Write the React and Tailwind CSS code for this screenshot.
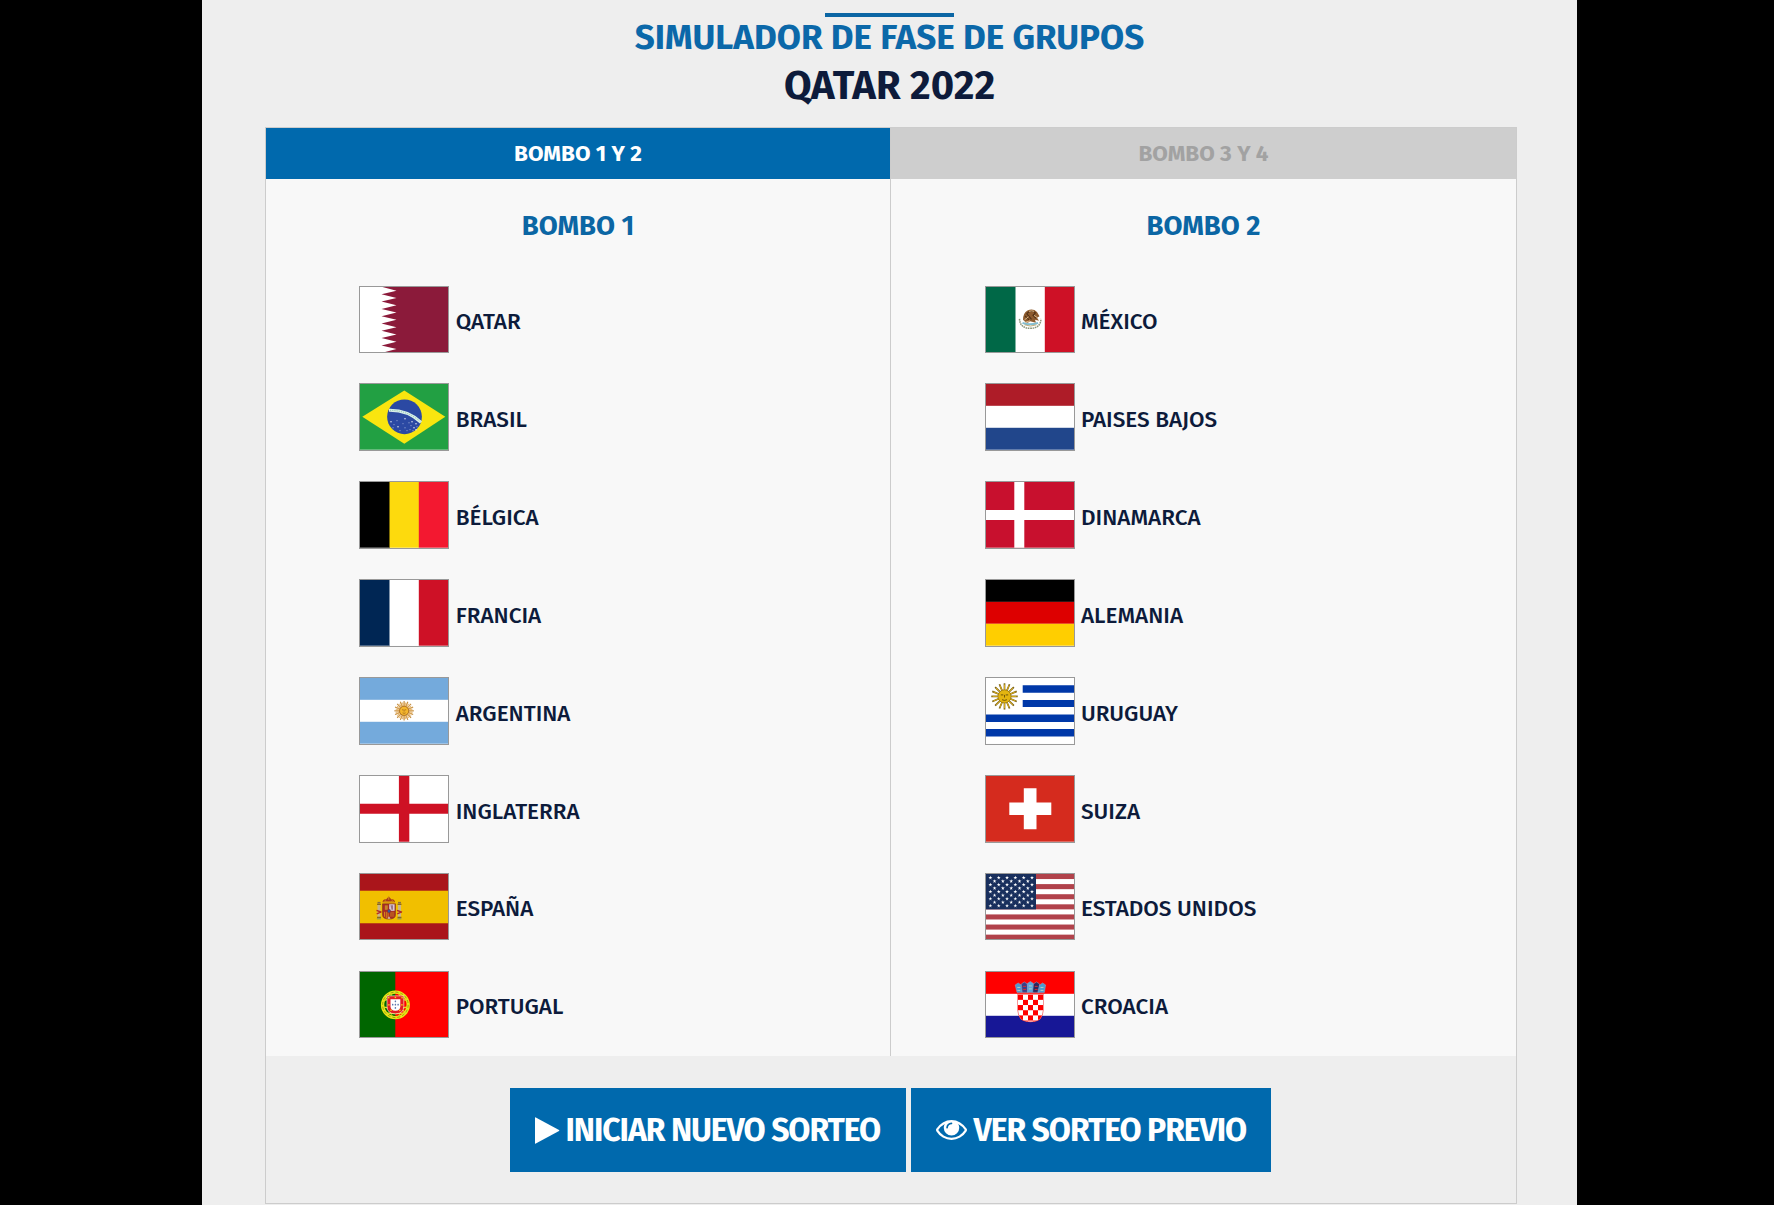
const range = (n) => Array.from({ length: n }, (_, i) => i);

const Vertical = ({ colors }) => (
  <>
    <rect width="30" height="66" fill={colors[0]} />
    <rect x="29.5" width="29.5" height="66" fill={colors[1]} />
    <rect x="58.8" width="29.2" height="66" fill={colors[2]} />
  </>
);

const Horizontal = ({ colors }) => (
  <>
    <rect width="88" height="22" fill={colors[0]} />
    <rect y="22" width="88" height="22" fill={colors[1]} />
    <rect y="44" width="88" height="22" fill={colors[2]} />
  </>
);

function Rays({ cx, cy, inner, outer, count, color, width }) {
  return range(count).map((i) => {
    const a = (i * 2 * Math.PI) / count;
    return (
      <line
        key={i}
        x1={cx + inner * Math.sin(a)}
        y1={cy - inner * Math.cos(a)}
        x2={cx + outer * Math.sin(a)}
        y2={cy - outer * Math.cos(a)}
        stroke={color}
        strokeWidth={width}
      />
    );
  });
}

function Qatar() {
  let d = "M88 0H22.5";
  range(9).forEach((i) => {
    d += `L36.5 ${(i + 0.5) * 7.333}L${i === 8 ? 22.5 : 21.5} ${(i + 1) * 7.333}`;
  });
  return (
    <>
      <rect width="88" height="66" fill="#fff" />
      <path d={d + "H88Z"} fill="#8b1a3a" />
    </>
  );
}

function Brasil() {
  const stars = [[31, 38], [34, 41], [37, 37], [38, 43], [33, 44], [43, 40], [45, 35], [49, 39], [51, 42], [54, 44], [50, 46], [53, 47], [56, 40], [57, 43], [47, 47], [52, 38], [40, 47], [45, 44], [56, 46]];
  return (
    <>
      <rect width="88" height="66" fill="#22a043" />
      <path d="M44.3 6.5 85.3 33 44.3 60 2.3 33Z" fill="#f9e50f" />
      <circle cx="44.5" cy="33" r="17.4" fill="#2b49a3" />
      <path d="M29 26.3Q48 26 61 38.5" fill="none" stroke="#d8eee8" strokeWidth="3" />
      <path d="M30 26.5Q48 26.5 60.5 38" fill="none" stroke="#58a88b" strokeWidth=".6" strokeDasharray="1 1.2" />
      {stars.map(([x, y], i) => (
        <circle key={i} cx={x} cy={y} r={i % 3 ? 0.5 : 0.75} fill="#dfe6f5" />
      ))}
    </>
  );
}

function Argentina() {
  return (
    <>
      <Horizontal colors={["#74aadc", "#fff", "#74aadc"]} />
      <Rays cx={44.1} cy={33} inner={4} outer={9.8} count={16} color="#c08a3c" width={1.1} />
      <Rays cx={44.1} cy={33} inner={4} outer={8.6} count={32} color="#dfa650" width={0.8} />
      <circle cx="44.1" cy="33" r="4.6" fill="#f4b62c" stroke="#a5671d" strokeWidth=".8" />
      <path d="M42 32h1.5m1.2 0h1.5M42.600 35q1.500 1 3 0M44.100 32v1.800" stroke="#8a5015" strokeWidth=".6" fill="none" />
    </>
  );
}

function Espana() {
  return (
    <>
      <rect width="88" height="66" fill="#aa151b" />
      <rect y="16.8" width="88" height="32.7" fill="#f1bf00" />
      <path d="M22.5 28.5Q23 25 26 25.5L28.7 22.5 31.5 25.5Q34.5 25 35 28.5Z" fill="#a93a1d" />
      <path d="M28.7 22v4M23.5 27.8H34M25 26.3l1 1.5m6.5-1.5-1 1.5" stroke="#d99b13" strokeWidth=".8" />
      <path d="M22.500 30H35.500V41Q35.500 45.300 29 45.300T22.500 41Z" fill="#a92b24" stroke="#7d3b1d" strokeWidth=".6" />
      <rect x="29.2" y="30.4" width="5.4" height="6.6" fill="#d5cbd3" />
      <path d="M30.5 31.5h2.5v4.5h-1.5z" fill="#9c7488" />
      <path d="M24.8 31.5h3v4.5h-3z" fill="#c7842a" />
      <path d="M24.5 38v5m1.8-5v6.5m1.8-6.5v6.5" stroke="#e6af18" strokeWidth=".7" />
      <path d="M30 38h4.2v5H30z" fill="#b85620" />
      <ellipse cx="29" cy="37.3" rx="1.6" ry="1.9" fill="#315b9c" stroke="#a5201c" strokeWidth=".5" />
      <path d="M29 42.5 27.5 45h3z" fill="#d9c4b1" />
      {[17.5, 38].map((x) => (
        <g key={x}>
          <path d={`M${x} 31h3v12h-3z`} fill="#c9b58a" />
          <path d={`M${x - 0.5} 30.5h4M${x - 0.5} 43.5h4`} stroke="#8e6a1c" strokeWidth="1.3" />
          <path d={`M${x} 28h3v1.7h-3z`} fill="#8b6e40" />
          <path d={`M${x - 1} 36.5l5 2M${x - 0.8} 40l4.5-2`} stroke="#b33024" strokeWidth="1.5" />
          <path d={`M${x - 0.6} 45h4`} stroke="#61827d" strokeWidth=".8" />
        </g>
      ))}
    </>
  );
}

function Portugal() {
  return (
    <>
      <rect width="88" height="66" fill="#060" />
      <rect x="35.3" width="52.7" height="66" fill="#f00" />
      <circle cx="35.4" cy="33" r="12.8" fill="none" stroke="#e9e514" strokeWidth="3.4" />
      <ellipse cx="35.4" cy="33" rx="6" ry="13.5" fill="none" stroke="#dedb1b" strokeWidth="1" />
      <path d="M23 29Q35 24 48 29M22.5 35Q35 38 48.5 35M24 40.5Q35 43 47 40.5M25 23.5 47 42" fill="none" stroke="#e5df1b" strokeWidth="1.2" />
      <circle cx="35.4" cy="33" r="12.8" fill="none" stroke="#54660c" strokeWidth=".5" strokeDasharray="3 2" />
      <path d="M27 24H43.8V34.5Q43.8 42 35.4 42T27 34.5Z" fill="#e31c22" stroke="#f3e7c2" strokeWidth=".7" />
      <path d="M30.5 27.5H40.3V34.5Q40.3 39 35.4 39T30.5 34.5Z" fill="#fff" />
      {[[35.4, 29.5], [32.7, 32.8], [35.4, 32.8], [38.1, 32.8], [35.4, 36.1]].map(([x, y]) => (
        <rect key={`${x}-${y}`} x={x - 0.7} y={y - 0.9} width="1.4" height="1.8" rx=".5" fill="#5b76ad" />
      ))}
      {[[28.7, 25.8], [35.4, 25.5], [42.1, 25.8], [28.9, 33], [41.9, 33], [31, 38.5], [39.8, 38.5]].map(([x, y]) => (
        <rect key={`${x}-${y}`} x={x - 0.7} y={y - 0.7} width="1.4" height="1.4" fill="#f2dc18" />
      ))}
    </>
  );
}

function Mexico() {
  return (
    <>
      <Vertical colors={["#006847", "#fff", "#ce1126"]} />
      <path d="M33.500 32Q34 41.500 44.300 41.500T55 32" fill="none" stroke="#8a9478" strokeWidth="1.5" strokeDasharray="1.6 .7" />
      <path d="M37 33Q37 26 41.500 23.500Q47 21 51 25L53.500 29.500 51 31 53 34 49 33 50 36 44 34.500Q41 38 37 33Z" fill="#8d5b2e" />
      <path d="M41 26.5Q45 22.5 49.5 26L47 28.5 50 31.5M39 29l4 4M40.5 26.500l5 6" fill="none" stroke="#503015" strokeWidth="1.1" />
      <path d="M43 24.5q3-1 5 0M48 28.5l3 2M38.5 33l4-3M39 35.500l5-1.500" stroke="#dcb98a" strokeWidth="1" fill="none" />
      <path d="M36.500 36Q44 39 52 36" fill="none" stroke="#83bed1" strokeWidth="2" />
      <path d="M38.5 38Q44.5 40.500 50.5 38" fill="none" stroke="#b29a5a" strokeWidth=".8" />
    </>
  );
}

function Uruguay() {
  return (
    <>
      <rect width="88" height="66" fill="#fff" />
      <path d="M36.7 7.3H88v7.5H36.7zM36.7 22H88v7.2H36.7zM0 36.7H88v7.5H0zM0 51.3H88v7.5H0z" fill="#0038a8" />
      <Rays cx={18.5} cy={18.5} inner={5} outer={13.2} count={16} color="#7a6012" width={1.7} />
      <Rays cx={18.5} cy={18.5} inner={5} outer={12} count={16} color="#d9ad1c" width={1} />
      <circle cx="18.5" cy="18.5" r="6.6" fill="#e3b510" stroke="#8b6d14" strokeWidth=".7" />
      <path d="M14.8 17h2.5m2.4 0h2.5M18.5 17v2.6M16 21.8q2.5 1.4 5 0" stroke="#654b08" strokeWidth=".9" fill="none" />
    </>
  );
}

function EstadosUnidos() {
  return (
    <>
      <rect width="88" height="66" fill="#fff" />
      {range(7).map((i) => (
        <rect key={i} y={i * 10.154} width="88" height="5.077" fill="#b1424b" />
      ))}
      <rect width="50" height="35.54" fill="#192f5d" />
      {range(9).flatMap((r) =>
        range(r % 2 ? 5 : 6).map((c) => {
          const x = 4.4 + c * 8.32 + (r % 2 ? 4.16 : 0);
          const y = 3.7 + r * 3.52;
          return (
            <path
              key={`${r}-${c}`}
              transform={`translate(${x} ${y}) scale(1.15)`}
              d="M0-1.7.4-.5 1.7-.5.6.2 1 1.5 0 .7-1 1.5-.6.2-1.7-.5-.4-.5Z"
              fill="#fff"
            />
          );
        })
      )}
    </>
  );
}

function Croacia() {
  const crown = ["#4c9bd0", "#3a3f86", "#5aa7dc", "#27275f", "#4c9bd0"];
  return (
    <>
      <Horizontal colors={["#f00", "#fff", "#171796"]} />
      <clipPath id="shield">
        <path d="M32 22.5H57V38Q57 50 44.5 50T32 38Z" />
      </clipPath>
      <path d="M31.5 22H57.5V38Q57.5 50.5 44.5 50.5T31.5 38Z" fill="#e33" />
      <g clipPath="url(#shield)">
        <rect x="32" y="22" width="25" height="29" fill="#fff" />
        {range(6).flatMap((r) =>
          range(5).map((c) =>
            (r + c) % 2 ? null : (
              <rect key={`${r}-${c}`} x={32 + c * 5} y={22.8 + r * 5.2} width="5" height="5.2" fill="#f00" />
            )
          )
        )}
      </g>
      {crown.map((fill, i) => {
        const x = 29.2 + i * 6.1;
        const y = [13, 12, 11.5, 12, 13][i];
        const lean = [2, 1, 0, -1, -2][i];
        return (
          <g key={i}>
            <path
              d={`M${x} ${y}l3-2 3 2L${x + 6 + lean * 0.6} 20.5H${x + lean * 0.9}Z`}
              fill={fill}
              stroke="#8cabd0"
              strokeWidth=".5"
            />
            <path
              d={`M${x + 1.5 + lean * 0.3} ${y + 2.5}h3m-3 3h3`}
              stroke={i % 2 ? "#d52b35" : "#b9cfc0"}
              strokeWidth="1"
            />
          </g>
        );
      })}
    </>
  );
}

const Inglaterra = () => (
  <>
    <rect width="88" height="66" fill="#fff" />
    <path d="M38.900 0h10.400v66H38.900zM0 28h88v10H0z" fill="#ce1124" />
  </>
);

const Dinamarca = () => (
  <>
    <rect width="88" height="66" fill="#c8102e" />
    <path d="M28.3 0h10v66h-10zM0 28.2h88v10H0z" fill="#fff" />
  </>
);

const Suiza = () => (
  <>
    <rect width="88" height="66" fill="#d52b1e" />
    <path d="M37.800 12.3h12.7v41.2H37.800zM23.3 26.6h42v12.6h-42z" fill="#fff" />
  </>
);

const pots = [
  {
    title: "BOMBO 1",
    spacing: "ml-[93px] [&>li]:gap-[6.7px]",
    teams: [
      ["QATAR", <Qatar />],
      ["BRASIL", <Brasil />],
      ["BÉLGICA", <Vertical colors={["#000", "#fdda0d", "#f31830"]} />],
      ["FRANCIA", <Vertical colors={["#002654", "#fff", "#ce1126"]} />],
      ["ARGENTINA", <Argentina />],
      ["INGLATERRA", <Inglaterra />],
      ["ESPAÑA", <Espana />],
      ["PORTUGAL", <Portugal />],
    ],
  },
  {
    title: "BOMBO 2",
    spacing: "ml-[94px] [&>li]:gap-[6px]",
    teams: [
      ["MÉXICO", <Mexico />],
      ["PAISES BAJOS", <Horizontal colors={["#ae1c28", "#fff", "#21468b"]} />],
      ["DINAMARCA", <Dinamarca />],
      ["ALEMANIA", <Horizontal colors={["#000", "#d00", "#ffce00"]} />],
      ["URUGUAY", <Uruguay />],
      ["SUIZA", <Suiza />],
      ["ESTADOS UNIDOS", <EstadosUnidos />],
      ["CROACIA", <Croacia />],
    ],
  },
];

function Pot({ title, spacing, teams }) {
  return (
    <section className="bg-[#f8f8f8]">
      <h3 className="pt-[27px] text-center text-[27.5px] leading-[40px] font-bold text-[#0b66a4]">{title}</h3>
      <ul className={`mt-[39.5px] flex flex-col gap-[30.2px] ${spacing}`}>
        {teams.map(([name, flag]) => (
          <li key={name} className="flex h-[67.7px] items-center">
            <svg
              viewBox="0 0 88 66"
              preserveAspectRatio="none"
              className="h-full w-[90px] shrink-0 border border-[#999999]"
            >
              {flag}
            </svg>
            <span className="pt-[5.8px] text-[22.5px] leading-[30px] font-medium whitespace-nowrap text-[#0d1b3b]">
              {name}
            </span>
          </li>
        ))}
      </ul>
    </section>
  );
}

export default function App() {
  return (
    <div className="h-[1205px] w-[1774px] overflow-hidden bg-black font-['Fira_Sans','Noto_Sans',sans-serif]">
      <main className="ml-[202px] h-full w-[1375px] bg-[#eeeeee] pt-[13px] pl-[63px]">
        <header className="flex w-[1252px] flex-col items-center pr-[3px]">
          <div className="h-1 w-[129px] bg-[#0b66a4]" />
          <h1 className="mt-[-3px] text-[35px] leading-[46px] font-bold text-[#0b68a9]">
            SIMULADOR DE FASE DE GRUPOS
          </h1>
          <h2 className="text-[40px] leading-[53px] font-bold text-[#0d1b3b]">QATAR 2022</h2>
        </header>
        <div className="mt-[14px] h-[1077px] w-[1252px] border border-[#cccccc]">
          <div className="grid h-[51px] grid-cols-[624px_1fr] text-center text-[22.5px] leading-[52px] font-bold">
            <div className="h-[51px] bg-[#0069ad] text-white">BOMBO 1 Y 2</div>
            <div className="h-[51px] border-l border-[#cccccc] bg-[#cecece] text-[#a2a2a2]">BOMBO 3 Y 4</div>
          </div>
          <div className="grid h-[877px] grid-cols-[624px_1px_1fr]">
            <Pot {...pots[0]} />
            <div className="bg-[#cccccc]" />
            <Pot {...pots[1]} />
          </div>
          <div className="flex gap-[5px] pt-8 pl-[244px] text-[32px] leading-[84px] font-bold tracking-[-1.07px] whitespace-nowrap text-white">
            <button className="flex h-[84px] w-[396px] items-center bg-[#0069ad] pl-[25px]">
              <svg viewBox="0 0 25 27" className="mr-[5.5px] h-[27px] w-[25px] shrink-0" fill="currentColor">
                <path d="M0 .8Q0 0 .8.4L24 13Q24.8 13.5 24 14L.8 26.6Q0 27 0 26.2Z" />
              </svg>
              INICIAR NUEVO SORTEO
            </button>
            <button className="flex h-[84px] w-[360px] items-center bg-[#0069ad] pl-[25px]">
              <svg viewBox="0 0 1792 1152" className="mr-[6.5px] h-[20px] w-[31px] shrink-0" fill="currentColor">
                <path d="M1664 576q-152-236-381-353 61 104 61 225 0 185-131.500 316.500t-316.500 131.500-316.500-131.500-131.500-316.500q0-121 61-225-229 117-381 353 133 205 333.500 326.500t434.500 121.500 434.500-121.500 333.500-326.500zm-720-384q0-20-14-34t-34-14q-125 0-214.500 89.500t-89.500 214.500q0 20 14 34t34 14 34-14 14-34q0-86 61-147t147-61q20 0 34-14t14-34zm848 384q0 34-20 69-140 230-376.500 368.500t-499.500 138.500-499.500-139-376.500-368q-20-35-20-69t20-69q140-229 376.500-368t499.500-139 499.500 139 376.500 368q20 35 20 69z" />
              </svg>
              VER SORTEO PREVIO
            </button>
          </div>
        </div>
      </main>
    </div>
  );
}
